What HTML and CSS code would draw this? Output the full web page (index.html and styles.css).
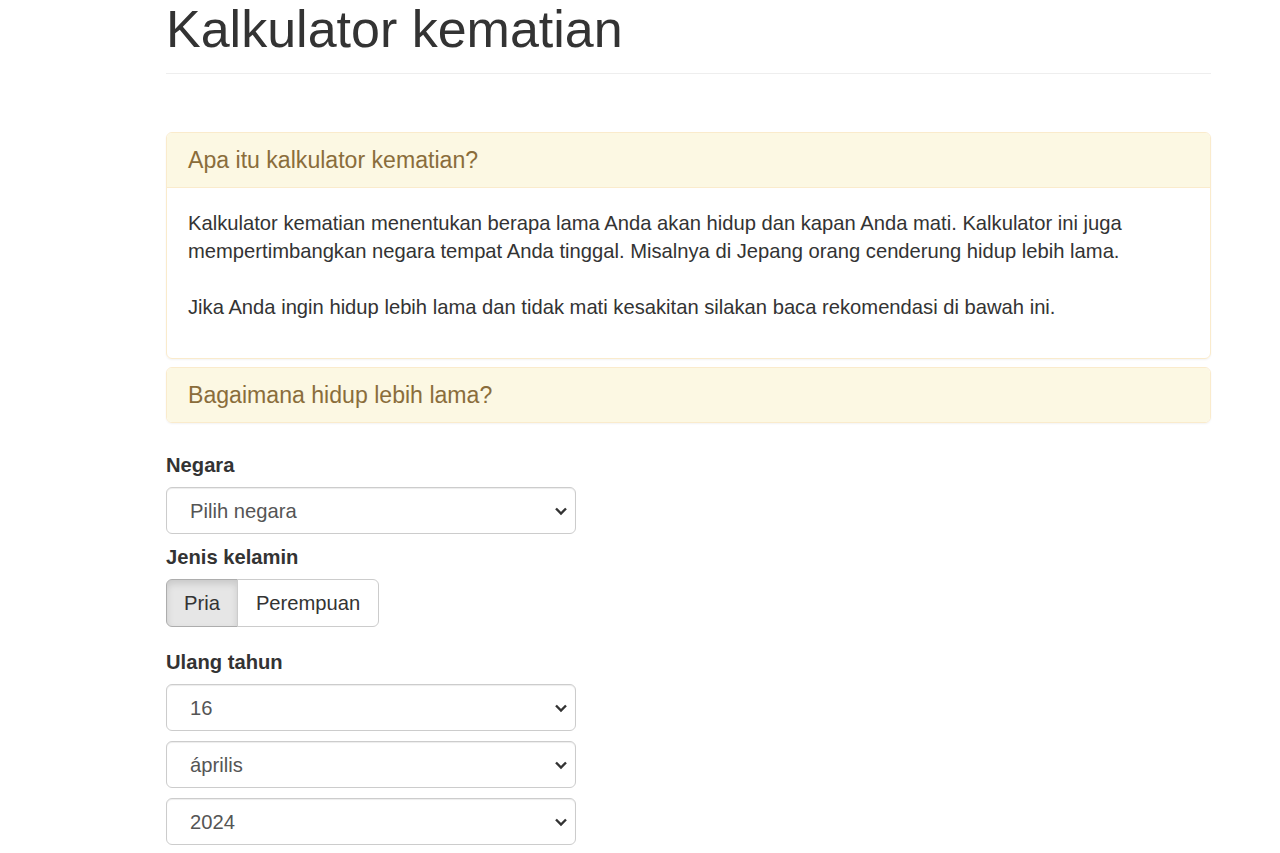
FILE: index.html
```html
<!DOCTYPE html>
<html lang="id">
<head>
    <meta charset="UTF-8">
    <meta name="viewport" content="width=device-width, initial-scale=1.0">
    <title>Kalkulator kematian</title>
    <link rel="stylesheet" href="styles.css">
</head>
<body>
    <div class="container">
        <div class="page-header">
            <h1>Kalkulator kematian</h1>
        </div>

        <div class="panel-group">
            <div class="panel">
                <div class="panel-heading">Apa itu kalkulator kematian?</div>
                <div class="panel-body">
                    <p>Kalkulator kematian menentukan berapa lama Anda akan hidup dan kapan Anda mati. Kalkulator ini juga mempertimbangkan negara tempat Anda tinggal. Misalnya di Jepang orang cenderung hidup lebih lama.</p>
                    <p>Jika Anda ingin hidup lebih lama dan tidak mati kesakitan silakan baca rekomendasi di bawah ini.</p>
                </div>
            </div>
            <div class="panel">
                <div class="panel-heading">Bagaimana hidup lebih lama?</div>
            </div>
        </div>

        <form class="calc-form">
            <label class="form-label" for="country">Negara</label>
            <select class="form-control" id="country">
                <option>Pilih negara</option>
            </select>

            <label class="form-label">Jenis kelamin</label>
            <div class="btn-group">
                <button type="button" class="btn active">Pria</button>
                <button type="button" class="btn">Perempuan</button>
            </div>

            <label class="form-label" for="day">Ulang tahun</label>
            <select class="form-control stacked" id="day">
                <option>16</option>
            </select>
            <select class="form-control stacked" id="month">
                <option>április</option>
            </select>
            <select class="form-control stacked" id="year">
                <option>2024</option>
            </select>
        </form>
    </div>
</body>
</html>
```

FILE: styles.css
```css
* {
    margin: 0;
    padding: 0;
    box-sizing: border-box;
}

body {
    font-family: 'Liberation Sans', Arial, sans-serif;
    font-size: 20.2px;
    line-height: 28px;
    color: #333;
    background: #fff;
}

.container {
    width: 1211px;
    padding-left: 166px;
}

.page-header {
    padding-bottom: 14px;
    border-bottom: 1px solid #eee;
    margin-bottom: 58px;
}

.page-header h1 {
    font-size: 52px;
    font-weight: 500;
    line-height: 59px;
}

.panel-group {
    margin-bottom: 28px;
}

.panel {
    border: 1px solid #faebcc;
    border-radius: 6px;
    box-shadow: 0 1px 2px rgba(0, 0, 0, 0.05);
    overflow: hidden;
}

.panel + .panel {
    margin-top: 8px;
}

.panel-heading {
    background: #fcf8e3;
    color: #8a6d3b;
    font-size: 23.1px;
    line-height: 26px;
    padding: 14px 21px;
}

.panel-body {
    border-top: 1px solid #faebcc;
    padding: 21px 21px 23px;
}

.panel-body p {
    margin-bottom: 28px;
}

.panel-body p:last-child {
    margin-bottom: 14px;
}

.calc-form {
    display: flex;
    flex-direction: column;
    align-items: flex-start;
}

.form-label {
    display: block;
    font-weight: 700;
    margin-bottom: 8px;
}

.form-control {
    appearance: none;
    -webkit-appearance: none;
    width: 410px;
    height: 47px;
    padding: 0 40px 0 23px;
    font-family: inherit;
    font-size: 20.2px;
    color: #555;
    background: #fff url("data:image/svg+xml,%3Csvg xmlns='http://www.w3.org/2000/svg' width='14' height='10' viewBox='0 0 14 10'%3E%3Cpath d='M2 2.5l5 5 5-5' fill='none' stroke='%23333' stroke-width='2.4'/%3E%3C/svg%3E") no-repeat right 7px center;
    border: 1px solid #ccc;
    border-radius: 6px;
    box-shadow: inset 0 1px 1px rgba(0, 0, 0, 0.075);
    margin-bottom: 9px;
}

.stacked {
    margin-bottom: 10px;
}

.btn-group {
    display: flex;
    margin-bottom: 21px;
}

.btn {
    font-family: inherit;
    font-size: 20.2px;
    line-height: 28px;
    color: #333;
    background: #fff;
    border: 1px solid #ccc;
    padding: 9px 18px;
    height: 48px;
    cursor: pointer;
}

.btn:first-child {
    border-radius: 6px 0 0 6px;
    padding: 9px 17px;
}

.btn:last-child {
    border-radius: 0 6px 6px 0;
    margin-left: -1px;
}

.btn.active {
    background: #e6e6e6;
    border-color: #adadad;
    box-shadow: inset 0 4px 7px rgba(0, 0, 0, 0.125);
}
```
